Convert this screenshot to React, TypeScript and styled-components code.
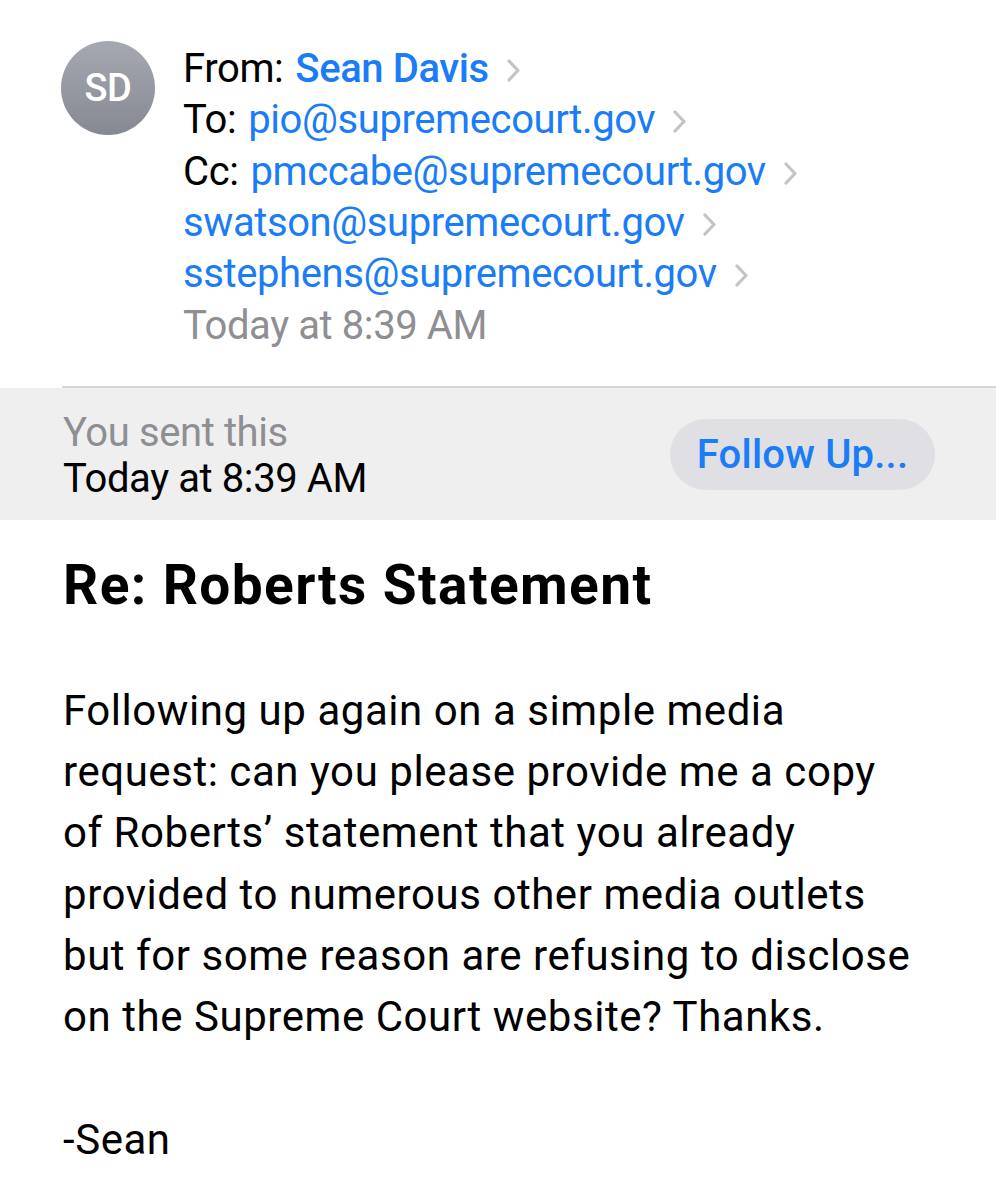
import React from 'react';
import styled, { createGlobalStyle } from 'styled-components';

const GlobalStyle = createGlobalStyle`
  html, body {
    margin: 0;
    padding: 0;
    background: #ffffff;
  }
  body {
    font-family: Roboto, 'Noto Sans', 'Liberation Sans', sans-serif;
    -webkit-font-smoothing: antialiased;
  }
`;

const blue = '#1a7cf6';
const grey = '#8e8e93';

const Page = styled.div`
  width: 996px;
  min-height: 1200px;
  background: #fff;
  color: #000;
  overflow: hidden;
`;

const Header = styled.div`
  display: flex;
  align-items: flex-start;
  gap: 28px;
  padding: 41px 0 0 61px;
  height: 386px;
  box-sizing: border-box;
`;

const Avatar = styled.div`
  flex: 0 0 94px;
  width: 94px;
  height: 94px;
  border-radius: 50%;
  background: linear-gradient(180deg, #a6a9b2 0%, #868992 100%);
  color: #fff;
  font-weight: 500;
  font-size: 38px;
  letter-spacing: -0.5px;
  display: flex;
  align-items: center;
  justify-content: center;
`;

const Lines = styled.div`
  display: flex;
  flex-direction: column;
  margin-top: 2px;
`;

const Line = styled.div`
  display: flex;
  align-items: center;
  height: 51.3px;
  font-size: 40px;
  letter-spacing: -0.4px;
  white-space: nowrap;
`;

const Label = styled.span`
  color: #000;
  margin-right: 12px;
`;

const Addr = styled.span<{ $bold?: boolean }>`
  color: ${blue};
  font-weight: ${p => (p.$bold ? 500 : 400)};
`;

const Date = styled.span`
  color: ${grey};
`;

const Chevron = styled.svg`
  width: 13px;
  height: 23px;
  margin-left: 18px;
  margin-top: 4px;
`;

const Rule = styled.div`
  height: 2px;
  margin-left: 62px;
  background: #d6d6da;
`;

const Band = styled.div`
  background: #efeff0;
  height: 132px;
  display: flex;
  align-items: center;
  justify-content: space-between;
  padding: 0 62px 0 63px;
  box-sizing: border-box;
`;

const SentInfo = styled.div`
  display: flex;
  flex-direction: column;
  font-size: 40px;
  letter-spacing: -0.4px;
  line-height: 46px;
  margin-top: 4px;
`;

const SentLabel = styled.div`
  color: ${grey};
`;

const SentDate = styled.div`
  color: #000;
`;

const FollowButton = styled.button`
  width: 265px;
  height: 71px;
  border: none;
  border-radius: 36px;
  background: #dfdfe4;
  color: ${blue};
  font-family: inherit;
  font-size: 40px;
  font-weight: 500;
  letter-spacing: 0.2px;
  margin-right: -1px;
  padding: 0;
`;

const Body = styled.div`
  padding: 33px 74px 0 63px;
`;

const Subject = styled.h1`
  margin: 0;
  font-size: 55px;
  font-weight: 700;
  letter-spacing: 1.4px;
  line-height: 64px;
  white-space: nowrap;
`;

const Paragraph = styled.p`
  margin: 63px 0 0;
  font-size: 42px;
  line-height: 61.2px;
  letter-spacing: 0.55px;
`;

const Signoff = styled.p`
  margin: 62px 0 0;
  font-size: 42px;
  line-height: 61px;
  letter-spacing: 0.55px;
`;

const Chev = () => (
  <Chevron viewBox="0 0 13 23" fill="none">
    <path d="M2 2 L11 11.5 L2 21" stroke="#c4c4c7" strokeWidth="3.2" strokeLinecap="round" strokeLinejoin="round" />
  </Chevron>
);

const recipients = [
  { label: 'To:', addr: 'pio@supremecourt.gov' },
  { label: 'Cc:', addr: 'pmccabe@supremecourt.gov' },
  { label: '', addr: 'swatson@supremecourt.gov' },
  { label: '', addr: 'sstephens@supremecourt.gov' },
];

export default function App() {
  return (
    <Page>
      <GlobalStyle />
      <Header>
        <Avatar>SD</Avatar>
        <Lines>
          <Line>
            <Label>From:</Label>
            <Addr $bold>Sean Davis</Addr>
            <Chev />
          </Line>
          {recipients.map(r => (
            <Line key={r.addr}>
              {r.label && <Label>{r.label}</Label>}
              <Addr>{r.addr}</Addr>
              <Chev />
            </Line>
          ))}
          <Line>
            <Date>Today at 8:39 AM</Date>
          </Line>
        </Lines>
      </Header>
      <Rule />
      <Band>
        <SentInfo>
          <SentLabel>You sent this</SentLabel>
          <SentDate>Today at 8:39 AM</SentDate>
        </SentInfo>
        <FollowButton>Follow Up...</FollowButton>
      </Band>
      <Body>
        <Subject>Re: Roberts Statement</Subject>
        <Paragraph>
          Following up again on a simple media request: can you please provide me a copy of Roberts’ statement that
          you already provided to numerous other media outlets but for some reason are refusing to disclose on the
          Supreme Court website? Thanks.
        </Paragraph>
        <Signoff>-Sean</Signoff>
      </Body>
    </Page>
  );
}
